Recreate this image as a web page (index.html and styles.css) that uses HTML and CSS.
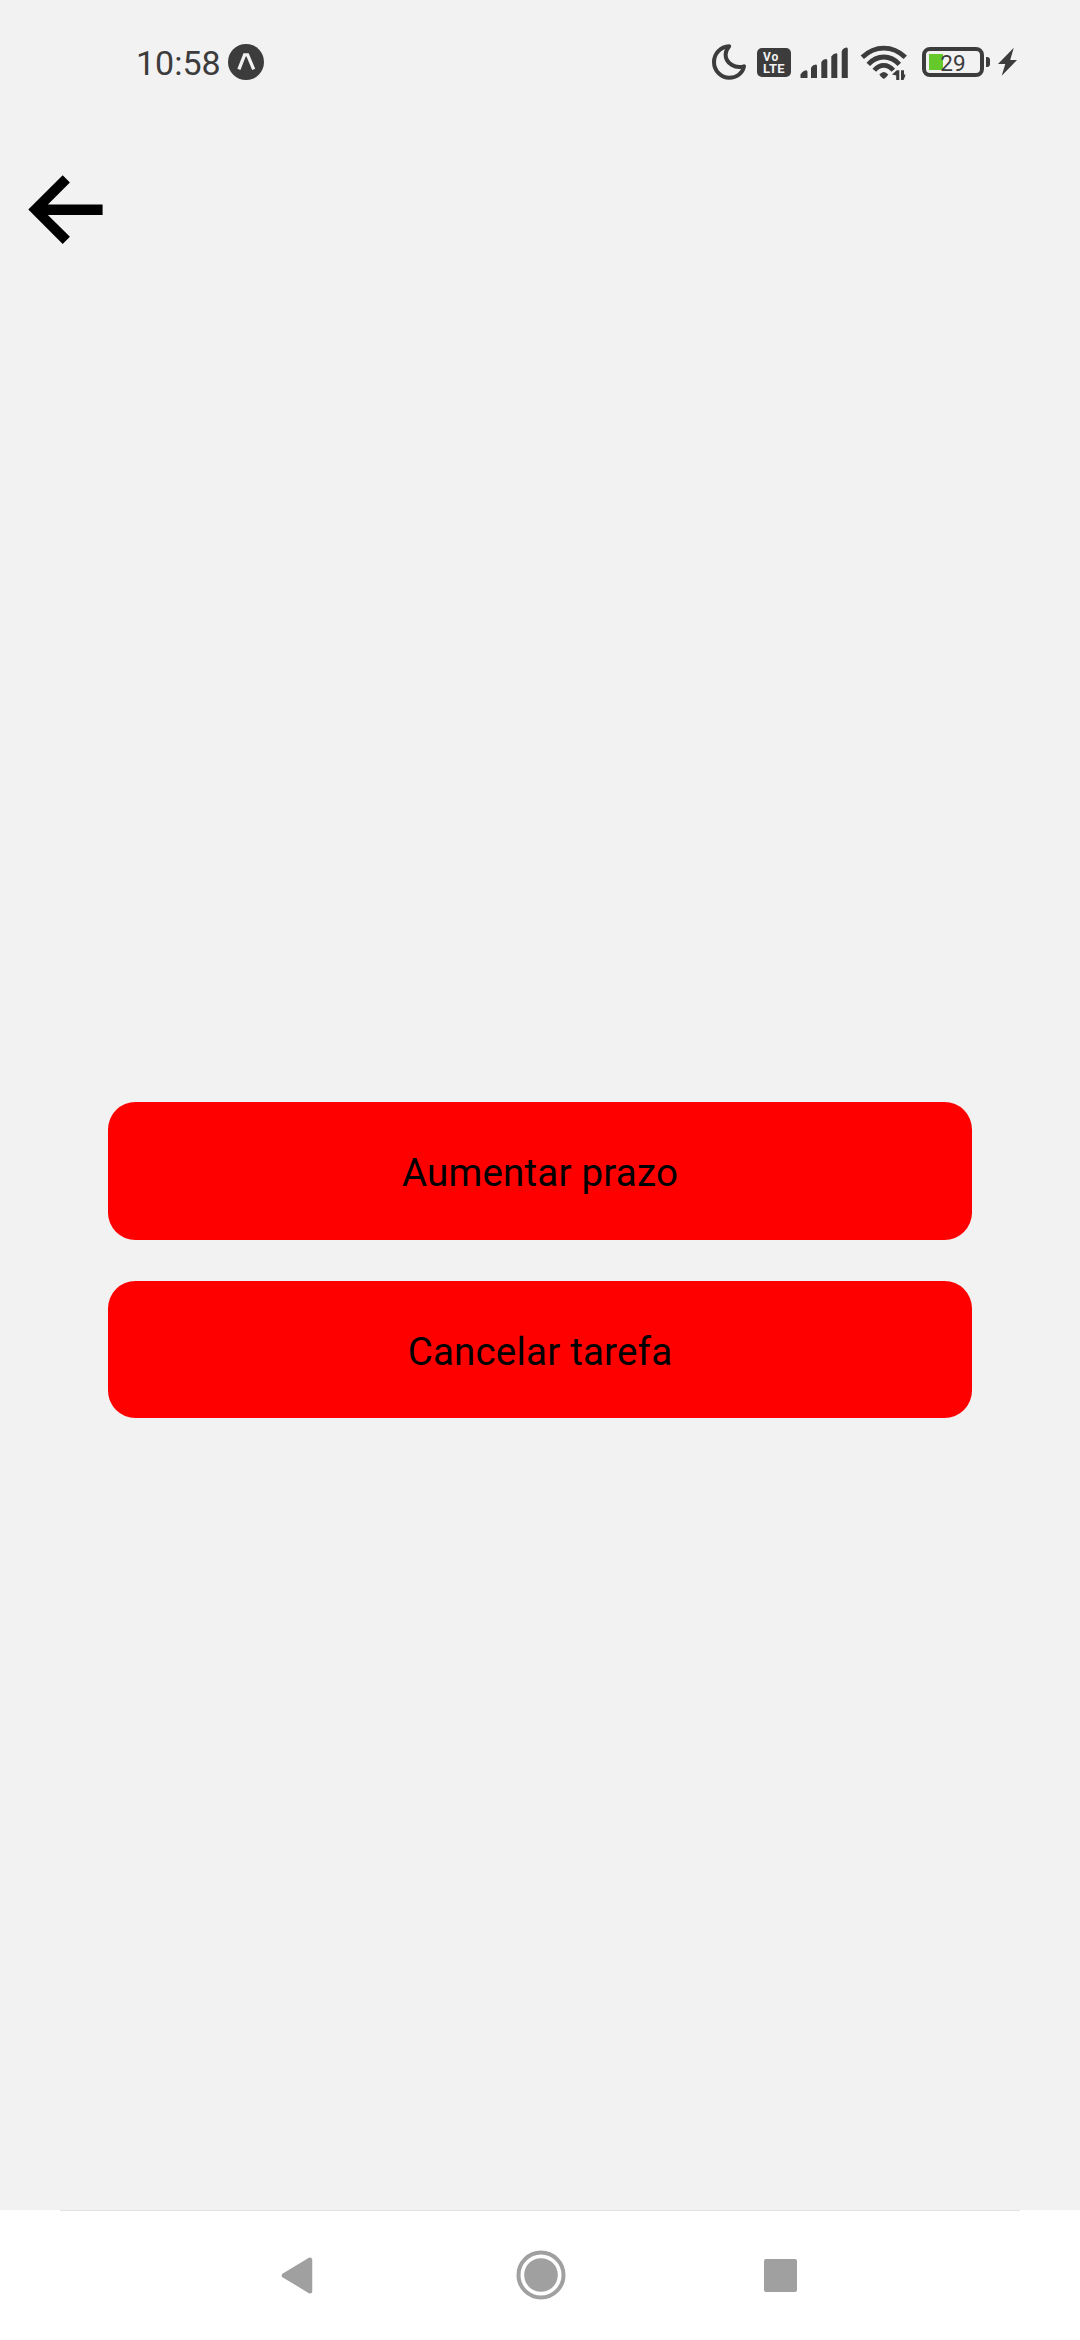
FILE: index.html
```html
<!DOCTYPE html>
<html lang="pt-BR">
<head>
<meta charset="utf-8">
<title>Tarefa</title>
<link rel="stylesheet" href="styles.css">
</head>
<body>
<div class="screen">
  <header class="status">
    <span class="clock">10:58</span>
    <svg class="expo" width="36" height="36" viewBox="0 0 36 36">
      <circle cx="18" cy="18" r="18" fill="#3c3c3c"/>
      <path d="M10.900 25.300 L16.600 10.800 H19.600 L25.700 25.300" fill="none" stroke="#f2f2f2" stroke-width="3.300"/>
    </svg>
    <div class="indicators">
      <svg class="moon" width="36" height="36" viewBox="0 0 36 36">
        <path d="M17.200 2.200 C8.500 2.600 2 9.600 2 18 C2 26.700 9 33.800 17.300 33.800 C24.500 33.800 30.500 29.500 32 22.300 C23.500 25 13.500 19.500 13.600 10.500 C13.700 7 15.300 4.500 17.200 2.200 Z" fill="none" stroke="#3c3c3c" stroke-width="4" stroke-linejoin="round"/>
      </svg>
      <div class="volte"><span class="vo">Vo</span><span class="lte">LTE</span></div>
      <svg class="signal" width="48" height="31" viewBox="0 0 48 31">
        <g fill="#3c3c3c">
          <path d="M0.500 31 V27.500 Q3 23.500 6 23.200 Q7.500 23.200 7.500 25 V31Z"/>
          <path d="M11 31 V20.500 Q13 17.700 16 17.500 Q17 17.500 17 19 V31Z"/>
          <path d="M21.300 31 V15 Q23 12.200 26 12 Q27.300 12 27.300 13.500 V31Z"/>
          <path d="M31.300 31 V9.500 Q33 6.500 36.200 6.200 Q37.300 6.200 37.300 7.500 V31Z"/>
          <path d="M41.700 31 V4.500 Q43 1 46.200 0.600 Q47.800 0.600 47.800 2 V31Z"/>
        </g>
      </svg>
      <svg class="wifi" width="48" height="36" viewBox="860 45 48 36">
        <g fill="none" stroke="#3c3c3c" stroke-width="4.800">
          <path d="M862.300 57.300 Q872 48.200 883.800 48.200 Q895.600 48.200 905.300 57.300"/>
          <path d="M868.300 64.300 Q875 57 883.800 57 Q892.600 57 899.300 64.300"/>
          <path d="M874.300 70.200 Q878.500 65.300 883.800 65.300 Q889.100 65.300 893.300 70.200"/>
        </g>
        <path d="M879.300 74.600 Q883.800 69.400 888.300 74.600 Q887 77 883.800 79 Q880.600 77 879.300 74.600Z" fill="#3c3c3c"/>
        <path d="M892 74.500 L896.800 70.300 H899.300 V80 H896.200 V75.500Z M901 70.300 H904 V74.600 H905.500 L905 76.500 L903.500 80 H901Z" fill="#3c3c3c"/>
      </svg>
      <div class="battery"><span class="level">29</span></div>
      <i class="terminal"></i>
      <svg class="bolt" width="20" height="30" viewBox="0 0 20 30">
        <path d="M15.800 .7 L0 17 H7.300 L3.700 28.800 L19 13 H12.200Z" fill="#3c3c3c"/>
      </svg>
    </div>
  </header>
  <nav class="topbar">
    <svg width="76" height="70" viewBox="28 175 76 70">
      <path d="M28.300 209.500 L62.700 175.200 L69.900 182.400 L47.900 204.400 H102.600 V214.900 H47.900 L69.900 236.700 L62.700 243.900Z"/>
    </svg>
  </nav>
  <main class="actions">
    <button class="action">Aumentar prazo</button>
    <button class="action">Cancelar tarefa</button>
  </main>
  <footer class="navbar">
    <svg width="32" height="38" viewBox="0 0 32 38">
      <path d="M3 19.500 L29 3.800 V35.200Z" fill="#a0a0a0" stroke="#a0a0a0" stroke-width="4.500" stroke-linejoin="round"/>
    </svg>
    <svg class="home" width="50" height="50" viewBox="0 0 50 50">
      <circle cx="25" cy="25" r="22.500" fill="none" stroke="#a0a0a0" stroke-width="4"/>
      <circle cx="25" cy="25" r="16.800" fill="#a0a0a0"/>
    </svg>
    <i class="recents"></i>
  </footer>
</div>
</body>
</html>
```
FILE: styles.css
```css
* { box-sizing: border-box; }

body {
  margin: 0;
  background: #f2f2f2;
  font-family: Roboto, sans-serif;
}

svg { display: block; flex: none; }

.screen {
  display: flex;
  flex-direction: column;
  width: 1080px;
  height: 2340px;
}

.status {
  display: flex;
  align-items: center;
  height: 124px;
  padding: 0 62px 0 136px;
  color: #3c3c3c;
}

.clock {
  width: 92px;
  padding-top: 2px;
  font-size: 34px;
  line-height: 40px;
}

.indicators {
  display: flex;
  align-items: center;
  margin-left: auto;
}

.volte {
  display: flex;
  flex-direction: column;
  width: 34px;
  height: 29px;
  margin: 1px 9px 0 9px;
  padding: 3px 0 0 6px;
  border-radius: 5px;
  background: #3c3c3c;
  color: #f2f2f2;
  font-weight: 700;
  line-height: 12px;
}

.vo { font-size: 12px; letter-spacing: 1px; }
.lte { font-size: 13px; letter-spacing: 0.3px; }

.signal { margin-top: 1px; }
.wifi { margin: 1px 14px 0 12px; }

.battery {
  display: flex;
  align-items: center;
  justify-content: center;
  width: 62px;
  height: 30px;
  padding-top: 2px;
  border: 4px solid #3c3c3c;
  border-radius: 8px;
  background: linear-gradient(#65c92c, #65c92c) 3px 3px / 14px 16px no-repeat;
}

.level { font-size: 22.500px; line-height: 22px; }

.terminal {
  width: 4px;
  height: 10px;
  margin: 0 8px 0 2px;
  border-radius: 0 3px 3px 0;
  background: #3c3c3c;
}

.topbar { padding: 51px 28px 0; }

.actions {
  display: flex;
  flex: 1;
  flex-direction: column;
  gap: 41px;
  padding: 857px 108px 0;
}

.action {
  height: 138px;
  padding: 4px 0 0;
  border: 0;
  border-radius: 27.500px;
  background: #f00;
  color: #000;
  font: 38.500px/46px Roboto, sans-serif;
  letter-spacing: 0.2px;
}

.action + .action { height: 137px; }

.navbar {
  display: flex;
  align-items: center;
  height: 130px;
  padding: 0 283px 0 281px;
  justify-content: space-between;
  background: linear-gradient(#e3e3e3, #e3e3e3) center top / 960px 1px no-repeat #fff;
}

.home { margin-left: 4px; }

.recents {
  width: 33px;
  height: 33px;
  border-radius: 2px;
  background: #a0a0a0;
}
```
